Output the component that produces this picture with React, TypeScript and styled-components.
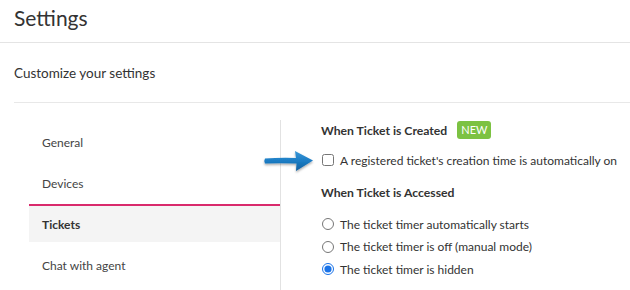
import React from "react";
import styled, { createGlobalStyle } from "styled-components";

const Global = createGlobalStyle`
  html, body { margin: 0; padding: 0; background: #fff; }
  body { font-family: Lato, "Noto Sans", sans-serif; color: #333; }
  * { box-sizing: border-box; }
`;

const Page = styled.div`
  width: 630px;
  height: 290px;
  overflow: hidden;
  position: relative;
`;

const Header = styled.header`
  height: 43px;
  padding-left: 14px;
  display: flex;
  align-items: center;
  border-bottom: 1px solid #e4e4e4;
`;

const Title = styled.h1`
  margin: 0 0 7px;
  font-size: 21px;
  font-weight: 400;
  color: #333;
`;

const SubHeader = styled.div`
  margin-left: 14px;
  height: 60px;
  display: flex;
  align-items: center;
  font-size: 13.5px;
  color: #333;
  border-bottom: 1px solid #e8e8e8;
`;

const Body = styled.div`
  display: flex;
  padding: 17px 0 0 29px;
`;

const Sidebar = styled.nav`
  flex: 0 0 252px;
  border-right: 1px solid #e2e2e2;
  padding-top: 2px;
  display: flex;
  flex-direction: column;
  height: 200px;
`;

const NavItem = styled.div<{ $active?: boolean; $offset?: number }>`
  height: ${(p) => (p.$active ? "38px" : "41px")};
  display: flex;
  align-items: center;
  padding-left: 13px;
  padding-top: ${(p) => p.$offset ?? 0}px;
  font-size: 12px;
  color: ${(p) => (p.$active ? "#333" : "#444")};
  font-weight: ${(p) => (p.$active ? 700 : 400)};
  background: ${(p) => (p.$active ? "#f4f4f4" : "transparent")};
  border-top: ${(p) => (p.$active ? "2px solid #d92a6c" : "none")};
`;

const Content = styled.section`
  padding-left: 40px;
  display: flex;
  flex-direction: column;
  min-width: 0;
  white-space: nowrap;
`;

const SectionTitle = styled.div`
  height: 20px;
  display: flex;
  align-items: center;
  gap: 10px;
  font-size: 12.2px;
  font-weight: 700;
  color: #333;
`;

const Badge = styled.span`
  background: #7cc242;
  color: #fff;
  font-size: 11px;
  font-weight: 400;
  padding: 0 4px;
  height: 18px;
  line-height: 18px;
  border-radius: 3px;
`;

const OptionRow = styled.label<{ $h: number }>`
  height: ${(p) => p.$h}px;
  display: flex;
  align-items: center;
  gap: 6px;
  font-size: 12px;
  color: #333;
  input { margin: 0 0 0 1px; width: 12px; height: 12px; accent-color: #1a73e8; }
`;

const Spacer = styled.div<{ $h: number }>`
  height: ${(p) => p.$h}px;
`;

const Arrow = styled.svg`
  position: absolute;
  left: 262px;
  top: 148px;
`;

export default function App() {
  return (
    <Page>
      <Global />
      <Header>
        <Title>Settings</Title>
      </Header>
      <SubHeader>Customize your settings</SubHeader>
      <Body>
        <Sidebar>
          <NavItem>General</NavItem>
          <NavItem>Devices</NavItem>
          <NavItem $active>Tickets</NavItem>
          <NavItem $offset={5}>Chat with agent</NavItem>
        </Sidebar>
        <Content>
          <SectionTitle>
            When Ticket is Created <Badge>NEW</Badge>
          </SectionTitle>
          <Spacer $h={10} />
          <OptionRow $h={20}>
            <input type="checkbox" />
            A registered ticket's creation time is automatically on
          </OptionRow>
          <Spacer $h={12} />
          <SectionTitle>When Ticket is Accessed</SectionTitle>
          <Spacer $h={11} />
          <OptionRow $h={22}>
            <input type="radio" name="t" />
            The ticket timer automatically starts
          </OptionRow>
          <OptionRow $h={23}>
            <input type="radio" name="t" />
            The ticket timer is off (manual mode)
          </OptionRow>
          <OptionRow $h={22}>
            <input type="radio" name="t" defaultChecked />
            The ticket timer is hidden
          </OptionRow>
        </Content>
      </Body>
      <Arrow width="56" height="28" viewBox="0 0 56 28">
        <defs>
          <linearGradient id="ag" x1="0" y1="0" x2="0" y2="1">
            <stop offset="0" stopColor="#3a98d8" />
            <stop offset="0.5" stopColor="#1b7cc4" />
            <stop offset="1" stopColor="#0f5f9e" />
          </linearGradient>
          <filter id="sh" x="-20%" y="-40%" width="140%" height="180%">
            <feDropShadow dx="0" dy="1.5" stdDeviation="1.2" floodColor="#000" floodOpacity="0.35" />
          </filter>
        </defs>
        <path
          d="M3 10.5 Q18 9.5 34 10 L33 3 L51 12.5 L34 23 L34.5 15.5 Q18 15 3 15.5 Q1.5 13 3 10.5 Z"
          fill="url(#ag)"
          filter="url(#sh)"
        />
      </Arrow>
    </Page>
  );
}
